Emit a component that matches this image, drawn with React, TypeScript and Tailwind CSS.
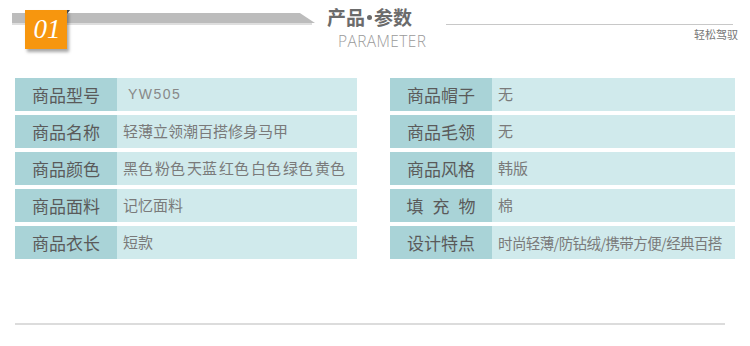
import React from 'react';

const left = [
  { label: '商品型号', value: 'YW505', latin: true },
  { label: '商品名称', value: '轻薄立领潮百搭修身马甲' },
  { label: '商品颜色', value: ['黑色', '粉色', '天蓝', '红色', '白色', '绿色', '黄色'] },
  { label: '商品面料', value: '记忆面料' },
  { label: '商品衣长', value: '短款' },
];

const right = [
  { label: '商品帽子', value: '无' },
  { label: '商品毛领', value: '无' },
  { label: '商品风格', value: '韩版' },
  { label: '填充物', value: '棉', spread: true },
  { label: '设计特点', value: '时尚轻薄/防钻绒/携带方便/经典百搭', tight: true },
];

type Row = { label: string; value: string | string[]; latin?: boolean; spread?: boolean; tight?: boolean };

function SpecRow({ row }: { row: Row }) {
  return (
    <div className="flex h-[33px]">
      <div className="w-[102px] shrink-0 bg-[#a9d3d7] flex items-center justify-center text-[17px] text-[#5a5a5a]">
        {row.spread ? (
          <span className="flex gap-[9px]">
            {row.label.split('').map((c) => (
              <span key={c}>{c}</span>
            ))}
          </span>
        ) : (
          row.label
        )}
      </div>
      <div className="flex-1 bg-[#d0eaec] flex items-center pl-[6px] text-[15px] text-[#7a7a7a] whitespace-nowrap overflow-hidden">
        {Array.isArray(row.value) ? (
          <span className="flex gap-[2px]">
            {row.value.map((v) => (
              <span key={v}>{v}</span>
            ))}
          </span>
        ) : row.latin ? (
          <span className="pl-[5px] text-[14px] tracking-[1.5px] font-['Liberation_Sans',sans-serif] text-[#888]">
            {row.value}
          </span>
        ) : row.tight ? (
          <span className="text-[14.5px] tracking-[-0.6px]">{row.value}</span>
        ) : (
          row.value
        )}
      </div>
    </div>
  );
}

export default function App() {
  return (
    <div className="w-[750px] h-[346px] bg-white overflow-hidden font-['Noto_Sans_CJK_SC','Noto_Sans',sans-serif]">
      {/* Header */}
      <div className="relative h-[78px] flex">
        <div className="ml-[12px] mt-[13px] w-[303px] h-[12px] flex flex-col">
          <div className="h-[10px] bg-[#bcbcbc] [clip-path:polygon(0_0,95%_0,100%_100%,0_100%)]" />
          <div className="h-[2px] bg-[#dedede] w-[300px]" />
        </div>
        <div className="ml-[12px] mt-[6px] w-[101px] flex flex-col">
          <span className="flex items-center text-[19px] leading-[22px] font-bold text-[#6b6b6b]">
            产品<span className="mx-[2px] w-[5px] h-[5px] rounded-full bg-[#6b6b6b]" />参数
          </span>
          <span className="mt-[4px] ml-[11px] text-[15.5px] leading-[18px] font-light text-[#9a9a9a] font-['Open_Sans',sans-serif] tracking-[0.4px]">
            PARAMETER
          </span>
        </div>
        <div className="ml-[18px] mt-[24px] w-[287px] flex flex-col items-end">
          <div className="w-full h-[1px] bg-[#c8c8c8]" />
          <span className="mt-[3px] -mr-[5px] text-[11px] leading-[13px] text-[#777]">轻松驾驭</span>
        </div>

        {/* number badge over the bar */}
        <div className="absolute left-[25px] top-[10px] w-[42px] h-[39px] bg-[#f7960e] flex items-center justify-center shadow-[2px_3px_3px_rgba(0,0,0,0.35)]">
          <span className="text-white italic text-[27px] leading-none font-['Liberation_Serif',serif] pl-[2px]">01</span>
          <div className="absolute -right-[3px] top-0 w-0 h-0 border-l-[3px] border-l-[#444] border-b-[4px] border-b-transparent" />
        </div>
      </div>

      {/* Spec table */}
      <div className="px-[15px] grid grid-cols-[342px_345px] gap-x-[33px]">
        <div className="flex flex-col gap-[4px]">
          {left.map((r) => (
            <SpecRow key={r.label} row={r} />
          ))}
        </div>
        <div className="flex flex-col gap-[4px]">
          {right.map((r) => (
            <SpecRow key={r.label} row={r} />
          ))}
        </div>
      </div>

      <div className="ml-[15px] mt-[64px] w-[710px] h-[2px] bg-[#dcdcdc]" />
    </div>
  );
}
